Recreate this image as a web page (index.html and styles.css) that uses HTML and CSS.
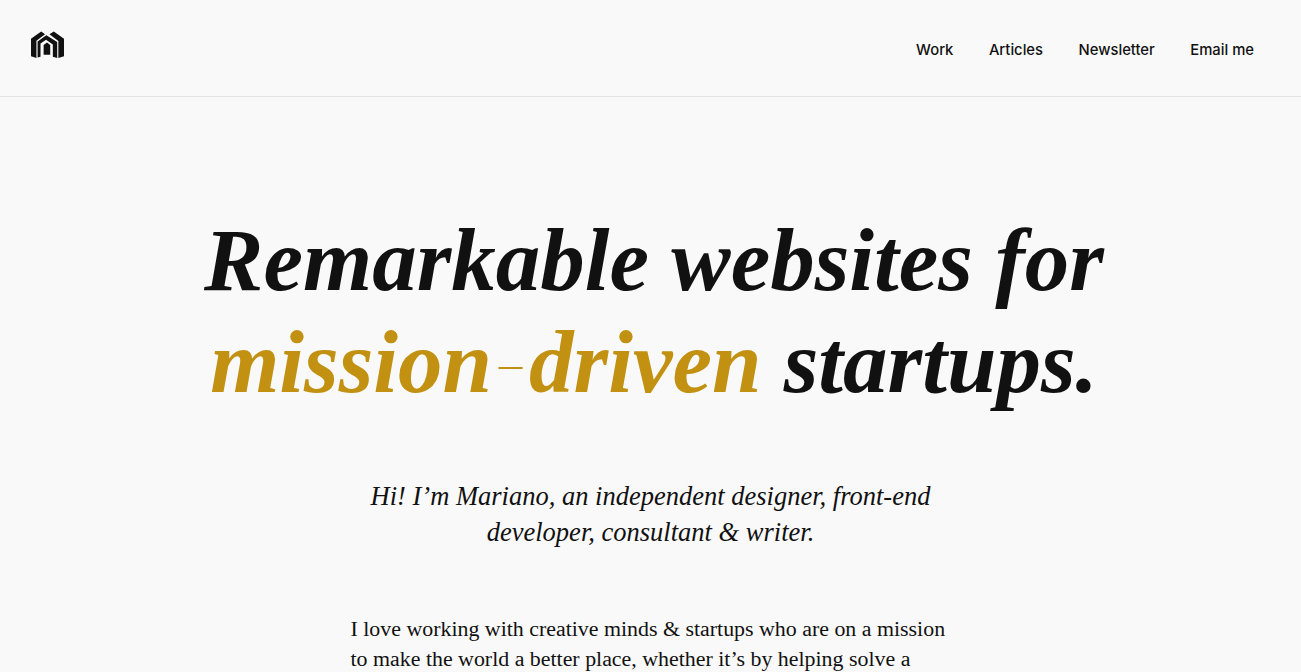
FILE: index.html
```html
<!DOCTYPE html>
<html lang="en">
<head>
<meta charset="utf-8">
<title>Mariano</title>
<link rel="stylesheet" href="styles.css">
</head>
<body>
<header class="site-header">
  <a class="logo" href="#" aria-label="Home">
    <svg width="33" height="28" viewBox="0 0 34 28">
      <path d="M0 7.5 L10.5 0 L14.5 2.8 L5.6 9.5 V27.5 L0 25.5 Z" fill="#111"/>
      <path d="M19 2.8 L23.5 0 L34 7.5 V25.5 L28.2 27.5 V10 Z" fill="#111"/>
      <path d="M6.8 10.5 L15.8 4 L27 11 V27.5 L22.5 26 V13.5 L15.5 8.5 L9.8 12.5 V26 L6.8 27 Z" fill="#111"/>
      <path d="M13 14 L16.5 11.5 L19.8 14 V24 H13 Z" fill="#111"/>
    </svg>
  </a>
  <nav class="nav">
    <a href="#">Work</a>
    <a href="#">Articles</a>
    <a href="#">Newsletter</a>
    <a href="#">Email me</a>
  </nav>
</header>
<main class="main">
  <h1 class="headline">Remarkable websites for<br><span class="accent">mission<span class="hyphen">-</span>driven</span> startups.</h1>
  <p class="intro">Hi! I’m Mariano, an independent designer, front-end developer, consultant &amp; writer.</p>
  <p class="body-copy">I love working with creative minds &amp; startups who are on a mission to make the world a better place, whether it’s by helping solve a</p>
</main>
</body>
</html>
```
FILE: styles.css
```css
html, body { margin: 0; height: 672px; overflow: hidden; }
body { background: #f9f9f9; color: #111; font-family: "Liberation Serif", serif; }
a { color: inherit; text-decoration: none; }
.site-header { border-bottom: 1px solid #e3e3e3; display: flex; justify-content: space-between; padding: 31px 47px 0 31px; height: 65px; }
.logo { display: block; height: 28px; }
.logo svg { display: block; }
.nav { display: flex; gap: 35.5px; font-family: "Inter", sans-serif; font-size: 14.8px; font-weight: 500; line-height: 38px; height: 38px; }
.main { display: flex; flex-direction: column; align-items: center; padding-top: 112px; }
.headline { margin: 0; padding-left: 7px; font-size: 89px; line-height: 102px; font-weight: 700; font-style: italic; text-align: center; white-space: nowrap; }
.accent { color: #c29112; }
.hyphen { font-family: "Inter", sans-serif; font-weight: 100; font-style: normal; line-height: 0; vertical-align: -4px; margin: 0 -1px; }
.intro { margin: 65px 0 0; width: 600px; text-align: center; font-size: 26.5px; line-height: 36px; font-style: italic; }
.body-copy { margin: 64px 0 0; width: 600px; font-size: 21.9px; line-height: 30px; }
```
